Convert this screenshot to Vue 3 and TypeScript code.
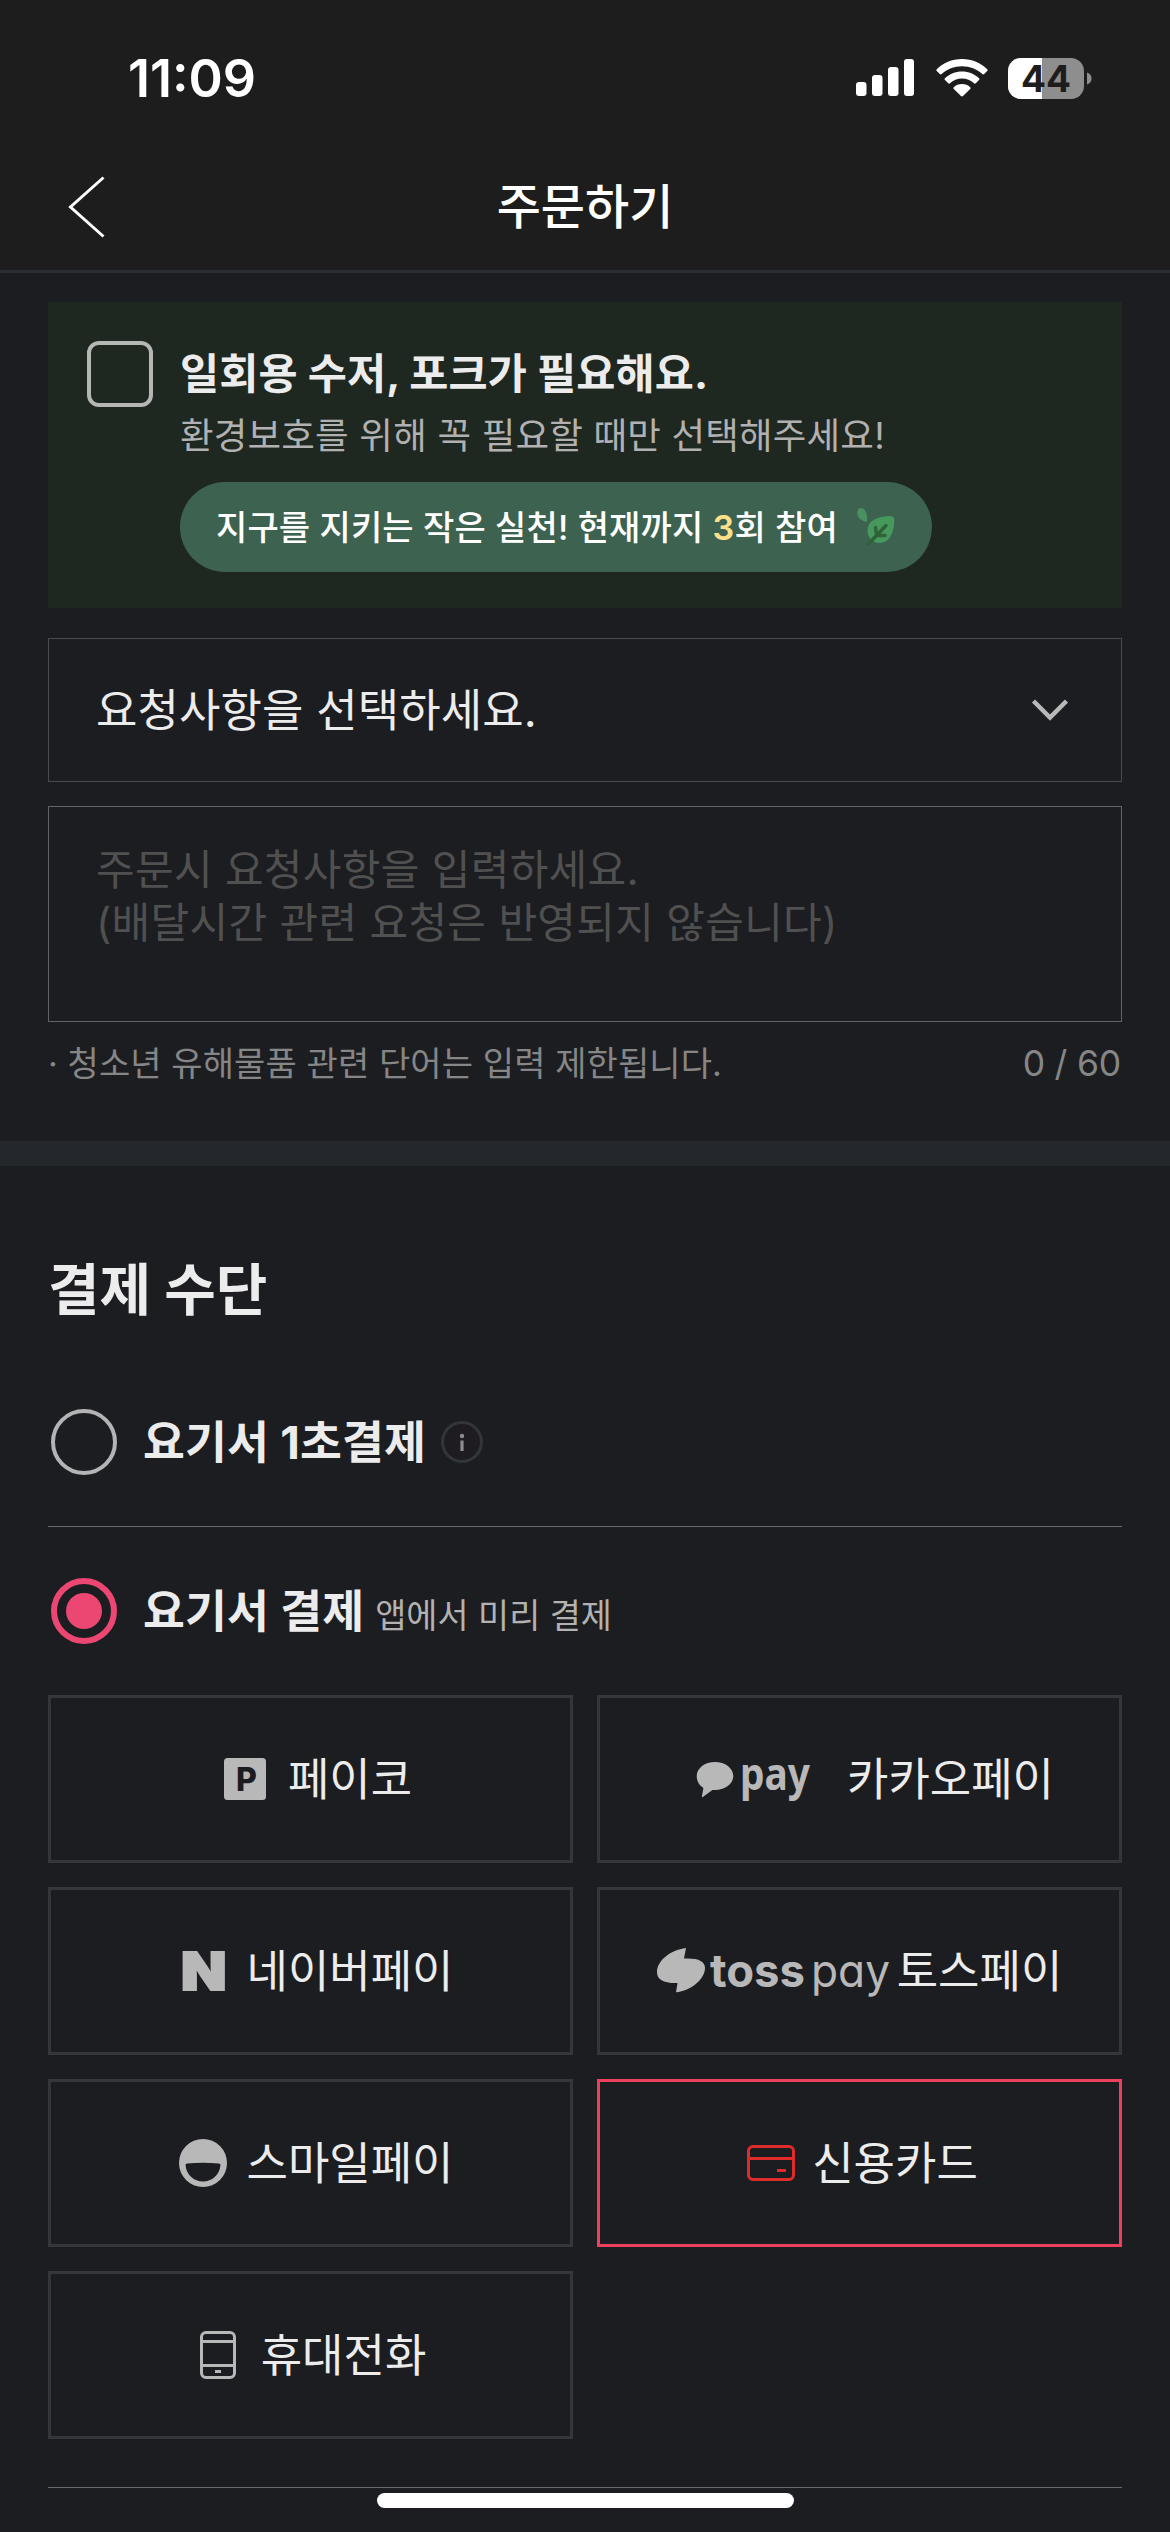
<script setup lang="ts">
import { ref } from 'vue'

interface Method {
  id: string
  label: string
}

const methods: Method[] = [
  { id: 'payco', label: '페이코' },
  { id: 'kakao', label: '카카오페이' },
  { id: 'naver', label: '네이버페이' },
  { id: 'toss', label: '토스페이' },
  { id: 'smile', label: '스마일페이' },
  { id: 'card', label: '신용카드' },
  { id: 'phone', label: '휴대전화' },
]

const selected = ref<string>('card')
const joinCount = ref<number>(3)
</script>

<template>
  <div class="screen">
    <header class="header">
      <div class="status">
        <span class="time">11:09</span>
        <div class="status-icons">
          <svg class="signal" width="58" height="38" viewBox="0 0 58 38" fill="#fff">
            <rect x="0" y="23" width="10.5" height="14" rx="3" />
            <rect x="16" y="16" width="10.5" height="21" rx="3" />
            <rect x="32" y="8" width="10.5" height="29" rx="3" />
            <rect x="48" y="0" width="10" height="37" rx="3" />
          </svg>
          <svg class="wifi" width="52" height="38" viewBox="0 0 52 38" fill="#fff">
            <path d="M26 0C36 0 45 4 51.2 10.2c.6.6.6 1.3 0 1.9l-3 3c-.6.6-1.3.6-1.9 0C41 10 34 7.2 26 7.2S11 10 5.700 15.100c-.6.6-1.300.6-1.900 0l-3-3c-.6-.6-.6-1.300 0-1.900C7 4 16 0 26 0z" />
            <path d="M26 12.500c6.600 0 12.600 2.500 17 6.700.6.6.6 1.300 0 1.900l-3.200 3.200c-.6.6-1.200.6-1.800 0-3.200-3-7.400-4.700-12-4.700s-8.800 1.700-12 4.700c-.6.6-1.200.6-1.800 0L9 21.100c-.6-.6-.6-1.300 0-1.900 4.400-4.200 10.400-6.700 17-6.700z" />
            <path d="M26 25c3.200 0 6.100 1.200 8.200 3.200.6.6.6 1.200 0 1.800l-7.200 7c-.6.6-1.400.6-2 0l-7.200-7c-.6-.6-.6-1.200 0-1.800C19.900 26.200 22.800 25 26 25z" />
          </svg>
          <svg class="battery" width="84" height="41" viewBox="0 0 84 41">
            <defs>
              <clipPath id="battery-body"><rect width="76" height="41" rx="13" /></clipPath>
            </defs>
            <g clip-path="url(#battery-body)">
              <rect width="76" height="41" fill="#8e8e8e" />
              <rect width="34" height="41" fill="#fff" />
            </g>
            <path d="M79 14.500c3 1 4.500 3.300 4.500 6s-1.500 5-4.500 6z" fill="#8e8e8e" />
            <text class="battery-text" x="38" y="34" text-anchor="middle" textLength="50" lengthAdjust="spacingAndGlyphs">44</text>
          </svg>
        </div>
      </div>
      <div class="nav">
        <svg class="back" width="38" height="62" viewBox="0 0 38 62" fill="none" stroke="#fff" stroke-width="3">
          <path d="M35.500 1.500 2.500 31l33 29.500" />
        </svg>
        <h1>주문하기</h1>
      </div>
    </header>

    <section class="request">
      <div class="eco">
        <span class="checkbox"></span>
        <div class="eco-body">
          <p class="eco-title">일회용 수저, 포크가 필요해요.</p>
          <p class="eco-sub">환경보호를 위해 꼭 필요할 때만 선택해주세요!</p>
          <div class="pill">
            <span>지구를 지키는 작은 실천! 현재까지 <b>{{ joinCount }}</b>회 참여</span>
            <svg width="38" height="38" viewBox="0 0 38 38">
              <path d="M4 0C8 0 11 6 10 14 3 13 0 8 .3 4 .5 1.500 2 .1 4 0z" fill="#4a9060" />
              <path d="M32 8c4 0 5.500 1 5.300 5C37 25 32 35 23 35c-8 0-12.500-6-12.500-12.500C10.500 13 20 8.500 32 8z" fill="#46985c" />
              <path d="M11.500 36 29 17.500M18.500 19.500l1 7M20 27.500h8" fill="none" stroke="#2f6238" stroke-width="3.400" stroke-linecap="round" />
            </svg>
          </div>
        </div>
      </div>

      <div class="select">
        <span>요청사항을 선택하세요.</span>
        <svg width="38" height="24" viewBox="0 0 38 24" fill="none" stroke="#b8b8b8" stroke-width="4.500">
          <path d="M2.500 3 19 19.500 35.500 3" />
        </svg>
      </div>

      <div class="textarea">주문시 요청사항을 입력하세요.<br />(배달시간 관련 요청은 반영되지 않습니다)</div>

      <div class="note">
        <span>· 청소년 유해물품 관련 단어는 입력 제한됩니다.</span>
        <span class="counter">0 / 60</span>
      </div>
    </section>

    <div class="band"></div>

    <section class="payment">
      <h2>결제 수단</h2>

      <div class="option option-first">
        <span class="radio"></span>
        <span class="option-name">요기서 1초결제</span>
        <svg class="info" width="42" height="42" viewBox="0 0 42 42">
          <circle cx="21" cy="21" r="19.500" fill="#1f1c21" stroke="#333639" stroke-width="3" />
          <circle cx="21" cy="15" r="2.200" fill="#8c8c8e" />
          <rect x="19.400" y="19.500" width="3.200" height="10.500" fill="#8c8c8e" />
        </svg>
      </div>

      <div class="option">
        <span class="radio radio-on"></span>
        <span class="option-name">요기서 결제</span>
        <span class="option-desc">앱에서 미리 결제</span>
      </div>

      <div class="grid">
        <div v-for="m in methods" :key="m.id" class="tile" :class="[m.id, { active: m.id === selected }]">
          <svg v-if="m.id === 'payco'" width="72" height="48" viewBox="0 0 72 48">
            <rect x="15" y="3" width="42" height="42" rx="3.500" fill="#b8b8b8" />
            <text class="payco-mark" x="27" y="35.500">P</text>
          </svg>
          <svg v-else-if="m.id === 'kakao'" width="175" height="48" viewBox="0 0 175 48" fill="#b8b8b8">
            <path d="M50 7c10.200 0 18.300 6.200 18.300 14S60.200 35 50 35c-.8 0-1.800 0-2.600-.1l-9.600 7.200c-.6.400-1 .1-.9-.6l1.500-8.600C34 30.500 31.700 26 31.700 21c0-7.800 8.100-14 18.300-14z" />
            <text class="kakao-mark" x="75" y="34.500" textLength="70" lengthAdjust="spacingAndGlyphs">pay</text>
          </svg>
          <svg v-else-if="m.id === 'naver'" width="72" height="48" viewBox="0 0 72 48">
            <text class="naver-mark" x="14" y="43" textLength="45.500" lengthAdjust="spacingAndGlyphs">N</text>
          </svg>
          <svg v-else-if="m.id === 'toss'" class="toss-logo" width="233" height="56" viewBox="0 0 233 56" fill="#b8b8b8">
            <path d="M29 5C13 7 0 18 0 29c0 8 7 11.500 20.500 11L19 49.300C34 48 48 36 48 25c0-7-7-10.200-21-9.500z" />
            <text class="toss-mark" x="53" y="43.500" textLength="95" lengthAdjust="spacingAndGlyphs">toss</text>
            <text class="toss-pay" x="154" y="43.500" textLength="79" lengthAdjust="spacingAndGlyphs">pay</text>
          </svg>
          <svg v-else-if="m.id === 'smile'" width="72" height="48" viewBox="0 0 72 48">
            <circle cx="36" cy="24" r="24" fill="#b8b8b8" />
            <path d="M20.300 24.500c10-1 21.400-1 31.400 0 1.500 0 1.800.8 1.700 2C52.500 36 45 42.500 36 42.500S19.500 36 18.600 26.500c-.1-1.200.2-2 1.700-2z" fill="#1c1d21" />
          </svg>
          <svg v-else-if="m.id === 'card'" width="72" height="48" viewBox="0 0 72 48" fill="none" stroke="#e02b2b" stroke-width="3">
            <rect x="13.500" y="7.500" width="45" height="33" rx="4.500" />
            <path d="M13 19.500h46M42 31.500h9" />
          </svg>
          <svg v-else width="72" height="48" viewBox="0 0 72 48" fill="none" stroke="#b8b8b8" stroke-width="3">
            <rect x="19.500" y="1.500" width="33" height="45" rx="4.500" />
            <path d="M19 10.500h34M19 34.500h34M33 40.500h6" />
          </svg>
          <span class="tile-label">{{ m.label }}</span>
        </div>
      </div>
      <div class="rule"></div>
    </section>

    <div class="home-indicator"></div>
  </div>
</template>

<style>
body {
  margin: 0;
  background: #1c1d21;
}
</style>

<style scoped>
.screen {
  position: relative;
  box-sizing: border-box;
  width: 1170px;
  height: 2532px;
  overflow: hidden;
  background: #1c1d21;
  color: #ececec;
  font-family: Inter, "Noto Sans CJK KR", sans-serif;
}
.screen * {
  box-sizing: border-box;
}
.screen svg {
  display: block;
  flex: none;
  overflow: visible;
}
p, h1, h2 {
  margin: 0;
}
span, p, h1, h2 {
  white-space: nowrap;
}

.header {
  height: 273px;
  background: #1d1d1d;
  border-bottom: 3px solid #2a2e32;
  color: #fff;
}
.status {
  display: flex;
  align-items: center;
  justify-content: space-between;
  height: 156px;
  padding: 0 78px 0 128px;
}
.time {
  font-size: 52px;
  font-weight: 600;
}
.status-icons {
  display: flex;
  align-items: center;
}
.wifi {
  margin-left: 22px;
}
.battery {
  margin-left: 20px;
}
.battery-text {
  font: 700 37px Inter, sans-serif;
  fill: #1d1d1d;
}
.nav {
  display: grid;
  grid-template-columns: 170px 1fr 170px;
  align-items: center;
  height: 102px;
}
.back {
  margin-left: 68px;
}
.nav h1 {
  font-size: 48px;
  font-weight: 500;
  line-height: 62px;
  text-align: center;
}

.request {
  padding: 29px 48px 53px;
}
.eco {
  display: flex;
  height: 306px;
  padding: 39px;
  background: #1f2721;
}
.checkbox {
  flex: none;
  width: 66px;
  height: 66px;
  border: 4.500px solid #b5b7b5;
  border-radius: 12px;
}
.eco-body {
  margin-left: 27px;
}
.eco-title {
  font-size: 42.500px;
  font-weight: 700;
  letter-spacing: 0.100px;
  line-height: 66px;
}
.eco-sub {
  font-size: 36.500px;
  letter-spacing: 0.200px;
  line-height: 58px;
  color: #b0b1b0;
}
.pill {
  display: flex;
  align-items: center;
  justify-content: space-between;
  width: 752px;
  height: 90px;
  margin-top: 17px;
  padding: 0 37px 0 36px;
  border-radius: 45px;
  background: #3d624f;
  color: #fff;
  font-size: 34px;
  font-weight: 500;
  letter-spacing: 0.150px;
}
.pill span {
  padding-bottom: 4px;
}
.pill b {
  font-weight: 600;
  color: #ffe08a;
}

.select {
  display: flex;
  align-items: center;
  justify-content: space-between;
  height: 144px;
  margin-top: 30px;
  padding: 0 52px 0 47px;
  border: 1px solid #4a4b4d;
  font-size: 45px;
  letter-spacing: 0.100px;
}
.select span {
  padding-bottom: 5px;
}
.textarea {
  height: 216px;
  margin-top: 24px;
  padding: 36px 47px;
  border: 1px solid #626366;
  color: #505050;
  font-size: 42px;
  letter-spacing: 0.300px;
  line-height: 53px;
}
.note {
  display: flex;
  justify-content: space-between;
  margin-top: 18px;
  padding-right: 1px;
  font-size: 34px;
  letter-spacing: 0.100px;
  line-height: 48px;
  color: #868686;
}
.counter {
  font-size: 35.500px;
  letter-spacing: -0.200px;
}

.band {
  height: 25px;
  background: #24282c;
}

.payment {
  padding: 92px 48px 0;
}
.payment h2 {
  margin-bottom: 87px;
  font-size: 56px;
  font-weight: 700;
  line-height: 64px;
}
.option {
  display: flex;
  align-items: center;
  height: 66px;
  margin: 51px 0;
  padding-left: 3px;
}
.option-first {
  box-sizing: content-box !important;
  margin: 0;
  padding-bottom: 51px;
  border-bottom: 1px solid #69696b;
}
.radio {
  display: grid;
  place-items: center;
  flex: none;
  width: 66px;
  height: 66px;
  margin-right: 26px;
  border: 4.500px solid #b4b4b6;
  border-radius: 50%;
}
.radio-on {
  border: 6px solid #ec4773;
}
.radio-on::after {
  content: "";
  width: 36px;
  height: 36px;
  border-radius: 50%;
  background: #ec4773;
}
.option-name {
  padding-bottom: 6px;
  font-size: 45.500px;
  font-weight: 700;
  letter-spacing: 0.200px;
}
.info {
  margin-left: 15px;
}
.option-desc {
  margin: 4px 0 0 11px;
  font-size: 33.800px;
  color: #b2b2b2;
}

.grid {
  display: grid;
  grid-template-columns: 1fr 1fr;
  grid-auto-rows: 168px;
  gap: 24px;
}
.tile {
  display: flex;
  align-items: center;
  justify-content: center;
  gap: 7px;
  border: 3px solid #34363a;
  font-size: 45px;
}
.tile-label {
  padding-bottom: 5px;
}
.tile.card {
  gap: 5px;
  padding-right: 6px;
}
.tile.phone {
  padding-right: 13px;
}
.tile.active {
  border-color: #ee3f5f;
}
.payco-mark {
  font: 800 32px Inter, sans-serif;
  fill: #1c1d21;
}
.kakao-mark {
  font: 700 44px "Noto Sans", sans-serif;
}
.naver-mark {
  font: 900 52px Inter, sans-serif;
  fill: #b8b8b8;
  stroke: #b8b8b8;
  stroke-width: 2px;
}
.toss-mark {
  font: 700 46px Inter, sans-serif;
}
.toss-pay {
  font: 400 46px Inter, sans-serif;
  font-feature-settings: "cv11";
}
.rule {
  height: 1px;
  margin-top: 48px;
  background: #69696b;
}

.home-indicator {
  position: absolute;
  left: 377px;
  bottom: 24px;
  width: 417px;
  height: 15px;
  border-radius: 8px;
  background: #fff;
}
</style>
